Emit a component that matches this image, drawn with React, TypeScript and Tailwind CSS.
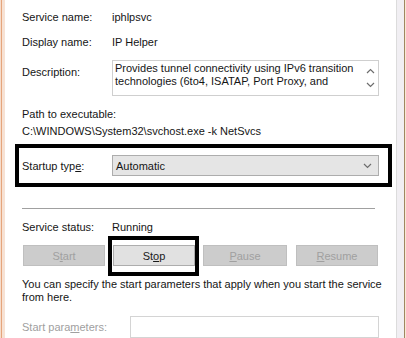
import React from "react";

function Chevron({ up = false }: { up?: boolean }) {
  return (
    <svg width="9" height="6" viewBox="0 0 9 6" className="block">
      <path
        d={up ? "M1 5 L4.5 1.5 L8 5" : "M1 1 L4.5 4.5 L8 1"}
        fill="none"
        stroke="#6d6d6d"
        strokeWidth="1.2"
      />
    </svg>
  );
}

function Btn({ children, enabled = false, className = "" }: { children: React.ReactNode; enabled?: boolean; className?: string }) {
  return (
    <div
      className={
        "h-[21px] flex items-center justify-center border " +
        (enabled ? "bg-[#e1e1e1] border-[#adadad] text-[#1a1a1a]" : "bg-[#cccccc] border-[#bfbfbf] text-[#a0a0a0]") +
        " " +
        className
      }
    >
      {children}
    </div>
  );
}

export default function App() {
  return (
    <div className="w-[406px] h-[338px] flex bg-white overflow-hidden font-['Liberation_Sans',sans-serif] text-[11px] leading-[14px] text-[#151515]">
      {/* left window edge */}
      <div className="w-[5px] h-full flex">
        <div className="w-[1px] bg-[#f6dccb]" />
        <div className="w-[1px] bg-[#e5a57c]" />
        <div className="w-[3px] bg-[#f7e2d4]" />
      </div>

      <main className="flex-1 flex flex-col">
        <div className="flex mt-[10px] ml-[17px]">
          <span className="w-[90px]">Service name:</span>
          <span>iphlpsvc</span>
        </div>
        <div className="flex mt-[11px] ml-[17px]">
          <span className="w-[90px]">Display name:</span>
          <span>IP Helper</span>
        </div>
        <div className="flex mt-[11px] ml-[17px]">
          <span className="w-[90px] mt-[5px]">Description:</span>
          <div className="w-[267px] h-[36px] border border-[#cfcfcf] flex">
            <div className="flex-1 pl-[2px] pt-[1px] leading-[13px]">
              <div>Provides tunnel connectivity using IPv6 transition</div>
              <div>technologies (6to4, ISATAP, Port Proxy, and</div>
            </div>
            <div className="w-[16px] flex flex-col items-center justify-between py-[7px]">
              <Chevron up />
              <Chevron />
            </div>
          </div>
        </div>
        <div className="mt-[11px] ml-[17px]">Path to executable:</div>
        <div className="mt-[3px] ml-[17px]">C:\WINDOWS\System32\svchost.exe -k NetSvcs</div>

        <div className="mt-[6px] ml-[10px] w-[377px] h-[48px] border-4 border-black flex items-start">
          <div className="flex items-center mt-[7px] ml-[3px]">
            <span className="w-[90px]">
              Startup typ<u>e</u>:
            </span>
            <div className="w-[267px] h-[21px] bg-[#e5e5e5] border border-[#adadad] flex items-center justify-between pl-[3px] pr-[6px]">
              <span>Automatic</span>
              <Chevron />
            </div>
          </div>
        </div>

        <div className="mt-[21px] ml-[17px] w-[353px] h-[1px] bg-[#a0a0a0]" />

        <div className="flex mt-[11px] ml-[17px]">
          <span className="w-[90px]">Service status:</span>
          <span>Running</span>
        </div>

        <div className="flex mt-[11px] ml-[18px]">
          <Btn className="w-[82px]">
            S<u>t</u>art
          </Btn>
          <div className="relative ml-[8px]">
            <Btn enabled className="w-[82px]">
              St<u>o</u>p
            </Btn>
            <div className="absolute -left-[5px] -top-[9px] w-[91px] h-[40px] border-4 border-black" />
          </div>
          <Btn className="w-[84px] ml-[8px]">
            <u>P</u>ause
          </Btn>
          <Btn className="w-[82px] ml-[9px]">
            <u>R</u>esume
          </Btn>
        </div>

        <p className="mt-[12px] ml-[17px] w-[360px] leading-[13px]">
          You can specify the start parameters that apply when you start the service from here.
        </p>

        <div className="flex items-center mt-[12px] ml-[17px]">
          <span className="w-[108px] text-[#a0a0a0]">
            Start para<u>m</u>eters:
          </span>
          <div className="w-[249px] h-[22px] border border-[#d4d4d4]" />
        </div>
      </main>

      {/* right window edge */}
      <div className="w-[10px] h-full flex">
        <div className="w-[1px] bg-[#dcdcdc]" />
        <div className="w-[7px] bg-[#f1eff3]" />
        <div className="w-[1px] bg-[#a08660]" />
        <div className="w-[1px] bg-[#f7ead6]" />
      </div>
    </div>
  );
}
